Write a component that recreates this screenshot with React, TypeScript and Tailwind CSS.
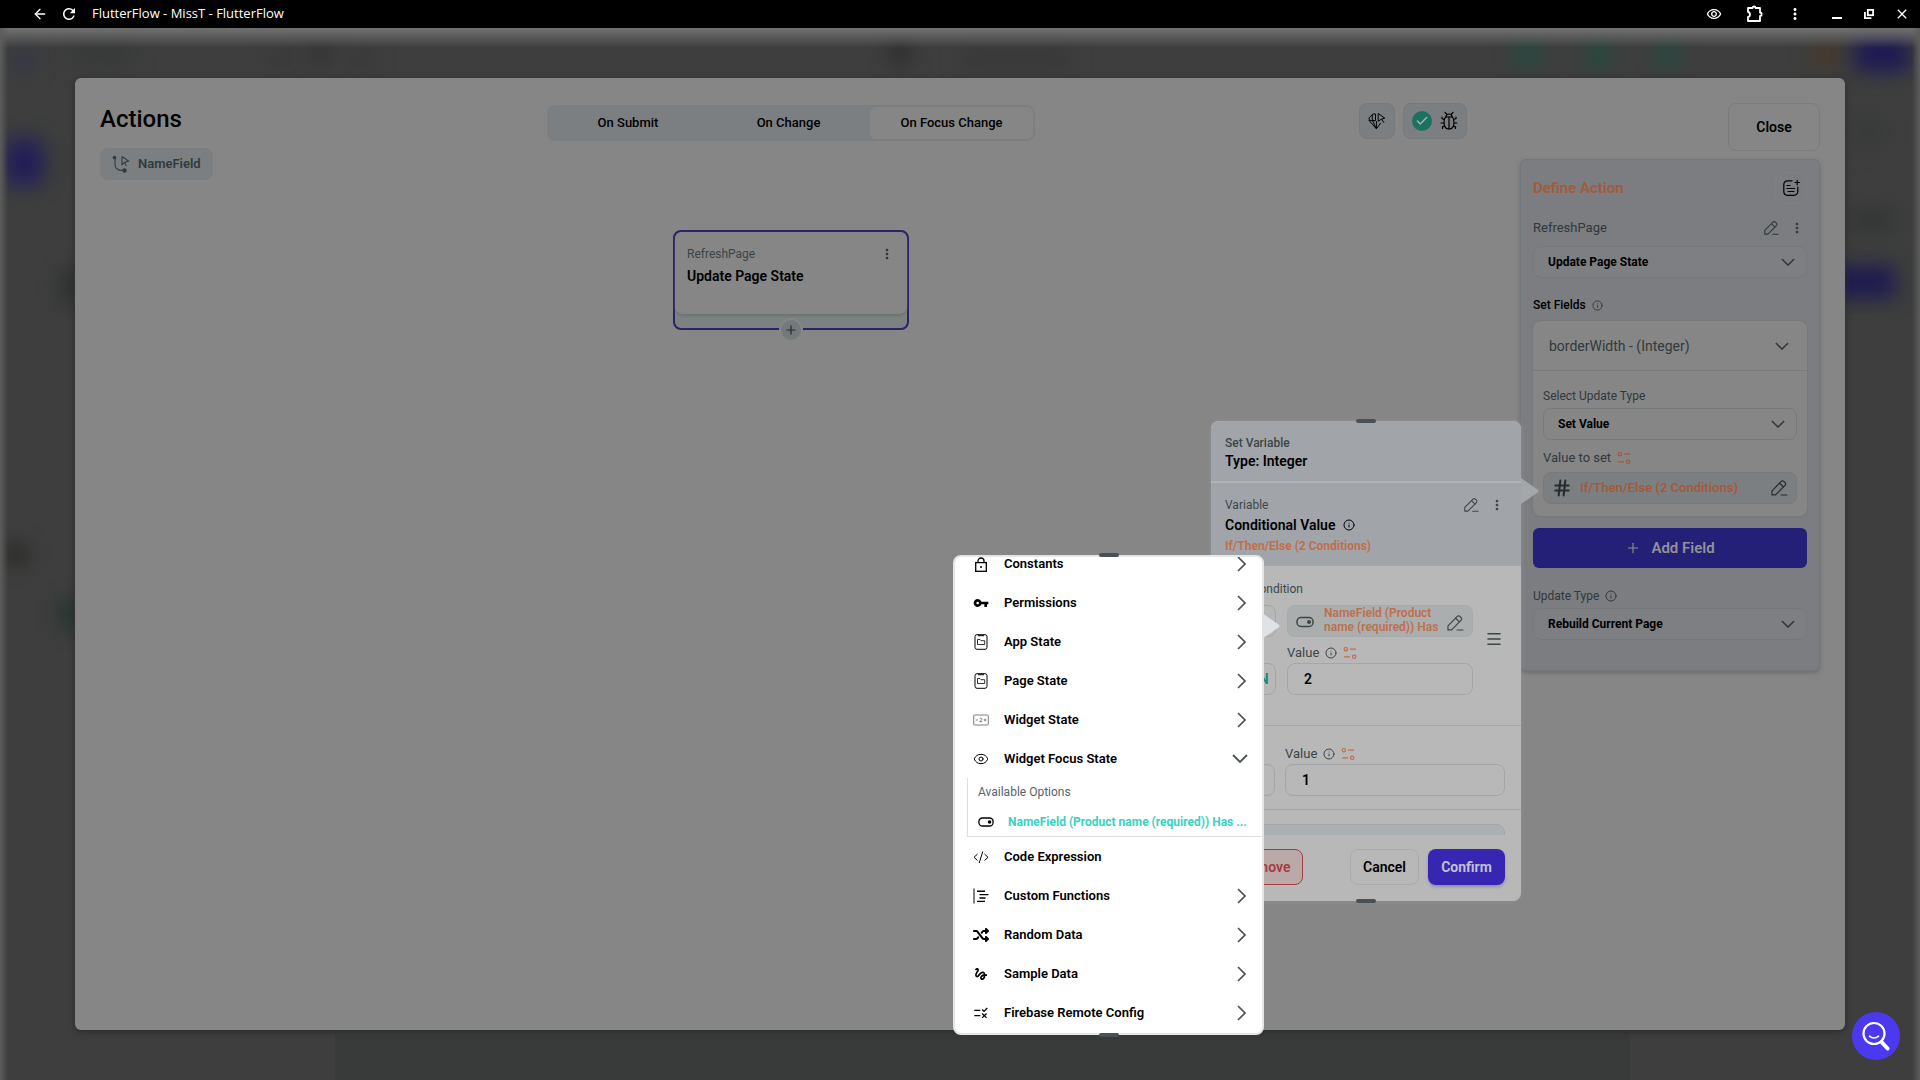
import type { ReactNode } from "react";
import { ArrowLeft, Check, Eye, Hash, Info, Menu, Plus } from "lucide-react";
import { FaShuffle } from "react-icons/fa6";
import {
  MdClose,
  MdGesture,
  MdMoreVert,
  MdOutlineRemoveRedEye,
  MdRefresh,
  MdRule,
  MdVpnKey,
} from "react-icons/md";

/* ---------- Icons ---------- */

function ChevronIcon({ direction, className = "w-3.5 h-2" }: { direction: "right" | "down"; className?: string }) {
  if (direction === "right") {
    return (
      <svg viewBox="0 0 9 16" className="h-4 w-[9px] text-[#4b5154]" fill="none" stroke="currentColor" strokeWidth="1.7">
        <path d="M1 1l7 7-7 7" />
      </svg>
    );
  }
  return (
    <svg viewBox="0 0 16 9" className={className} fill="none" stroke="currentColor" strokeWidth="1.8">
      <path d="M1 1l7 7 7-7" />
    </svg>
  );
}

function PuzzleIcon({ className = "" }: { className?: string }) {
  return (
    <svg viewBox="0 0 18 18" className={`size-[18px] ${className}`} fill="none" stroke="currentColor" strokeWidth="1.8" strokeLinejoin="round">
      <path d="M2 3h4.500c0-2 3-2 3 0H14v4.500c2.200 0 2.200 3.500 0 3.500V16H2v-4c2.600-.3 2.600-4.700 0-5z" />
    </svg>
  );
}

function PencilIcon({ className = "size-4" }: { className?: string }) {
  return (
    <svg viewBox="0 0 18 18" className={className} fill="none" stroke="currentColor" strokeWidth="1.2" strokeLinejoin="round" strokeLinecap="round">
      <path d="M2 16v-4.200L11.300 2.400a1.800 1.800 0 0 1 2.600 0l1.200 1.200a1.800 1.800 0 0 1 0 2.600L5.600 15.900H2z" />
      <path d="M9.600 4.200l3.800 3.700M11 16h6" />
    </svg>
  );
}

function VariableIcon() {
  return (
    <svg viewBox="0 0 14 14" className="size-3.5" fill="none" stroke="currentColor" strokeWidth="1.200">
      <circle cx="2.800" cy="3.200" r="1.700" />
      <circle cx="11.200" cy="10.800" r="1.700" />
      <path d="M7 3.200h6M1 10.800h6" />
    </svg>
  );
}

function ToggleIcon({ className = "w-4 h-3" }: { className?: string }) {
  return (
    <svg viewBox="0 0 18 11" className={className} fill="none" stroke="currentColor" strokeWidth="1.500">
      <rect x="1" y="1" width="16" height="9" rx="4" />
      <circle cx="13" cy="5.500" r="2" fill="currentColor" stroke="none" />
    </svg>
  );
}

function FlowIcon() {
  return (
    <svg viewBox="0 0 18 18" className="size-[18px]" fill="none" stroke="currentColor" strokeWidth="1.100">
      <circle cx="2.500" cy="2.500" r="1.800" fill="currentColor" stroke="none" />
      <circle cx="12.500" cy="15.500" r="2.200" fill="currentColor" stroke="none" />
      <path d="M3 3.500v6c0 4 3 6 8 6" />
      <path d="M10 1.500v8l2.500-2 1.800 3.400M10 1.500l6.500 4.500-4 1.500" />
    </svg>
  );
}

function GemIcon() {
  return (
    <svg viewBox="0 0 18 18" className="size-[18px]" fill="none" stroke="currentColor" strokeLinejoin="round">
      <path d="M7.500 2H4.800L1.200 5.800v2.800h6.300V2M4.300 3v5.600M1.200 8.600l7.200 8.200 4.400-6M4.500 8.600l3.900 8.200V9" />
      <path d="M10.200 1.500l6.600 4.700-3.200.8 2.400 3.800M13.600 7l-3.400 2.300V1.500" />
    </svg>
  );
}

function BugIcon() {
  return (
    <svg viewBox="0 0 18 20" className="h-5 w-[18px]" fill="none" stroke="currentColor" strokeWidth="1.200" strokeLinecap="round">
      <path d="M5.500 6h7c1.200 1.500 1.500 3.500 1.500 5.500 0 4-2 6.500-5 6.500s-5-2.500-5-6.500c0-2 .3-4 1.500-5.500z" />
      <path d="M6 6c0-4 6-4 6 0M9 6v12M6.500 3L5 1.300M11.500 3L13 1.300" />
      <path d="M4.300 8.500L2 7.500V6M13.700 8.500l2.300-1V6M4 12H1M14 12h3M4.700 15L2.500 16v1.500M13.300 15l2.200 1v1.500" />
    </svg>
  );
}

function NotePlusIcon() {
  return (
    <svg viewBox="0 0 18 18" className="size-[18px]" fill="none" stroke="currentColor" strokeWidth="1.200" strokeLinecap="round">
      <path d="M10 1.800H5.500A3.800 3.800 0 0 0 1.800 5.500v7A3.800 3.800 0 0 0 5.500 16.300h6.500a3.800 3.800 0 0 0 3.800-3.800V8" />
      <path d="M15.200 1.300v4.400M13 3.500h4.400M5 6.500h3M5 9.500h7.500M6 12.500h6" />
    </svg>
  );
}

function LockIcon() {
  return (
    <svg viewBox="0 0 16 16" className="size-4" fill="none" stroke="currentColor" strokeWidth="1.300">
      <rect x="2.700" y="6.600" width="10.600" height="8.700" />
      <path d="M5 6.500V5a3 3 0 0 1 6 0v1.500" />
      <circle cx="8" cy="11" r="1" fill="currentColor" stroke="none" />
    </svg>
  );
}

function StateIcon() {
  return (
    <svg viewBox="0 0 16 16" className="size-4" fill="none" stroke="currentColor">
      <rect x="2" y="0.700" width="12" height="14.600" rx="2" />
      <path d="M5 1.700h6" />
      <path d="M4.500 10.500V5.500h2.500l1 1.200h3.700v3.800z" strokeWidth="0.800" />
    </svg>
  );
}

function WidgetIcon() {
  return (
    <svg viewBox="0 0 16 16" className="size-4 text-[#6b7073]" fill="none" stroke="currentColor" strokeWidth="0.900">
      <rect x="0.700" y="3" width="14.600" height="10" rx="0.600" />
      <path d="M2.800 8h2M10.800 8h2.600M12.100 6.700v2.600M6.700 6.800c.3-.8 2.300-.8 2.300.4 0 .8-1.500 1.300-2.300 2.500h2.500" />
    </svg>
  );
}

function CodeIcon() {
  return (
    <svg viewBox="0 0 16 16" className="size-4" fill="none" stroke="currentColor">
      <path d="M4.500 5L1 8.300l3.500 3.200M11.500 5L15 8.300l-3.500 3.200M9.800 2.500L6.200 14" />
    </svg>
  );
}

function FunctionsIcon() {
  return (
    <svg viewBox="0 0 16 16" className="size-4" fill="none" stroke="currentColor" strokeWidth="1.400">
      <path d="M1 0.500v15" strokeWidth="1" />
      <path d="M4 3.200h8M6.500 6.600h9M6.500 10h6M4 13.400h8" />
    </svg>
  );
}

function SearchFace() {
  return (
    <svg viewBox="0 0 30 30" className="size-[30px]" fill="none" stroke="white" strokeLinecap="round">
      <circle cx="13" cy="12.500" r="10.500" strokeWidth="2.200" />
      <path d="M8.500 15.200c2.500 2.300 6.500 2.300 9 0" strokeWidth="1.600" />
      <path d="M20.500 21l6 6.500" strokeWidth="4" />
    </svg>
  );
}

/* ---------- Shared bits ---------- */

type DropdownProps = { id: string; label: string; value: string; className?: string };

function Dropdown({ id, label, value, className = "" }: DropdownProps) {
  return (
    <div className="relative text-[#33393c]">
      <select
        id={id}
        aria-label={label}
        defaultValue={value}
        className={`block h-8 w-full appearance-none rounded-lg border px-3.5 text-xs font-bold text-black ${className}`}
      >
        <option>{value}</option>
      </select>
      <ChevronIcon direction="down" className="pointer-events-none absolute right-3 top-3 h-2 w-3.5" />
    </div>
  );
}

function Handle({ edge }: { edge: string }) {
  return <div className={`absolute left-1/2 h-1 w-5 -translate-x-1/2 rounded-sm bg-[#4a5054] ${edge}`} />;
}

function Pointer({ className }: { className: string }) {
  return (
    <svg viewBox="0 0 18 26" className={`absolute left-full h-[26px] w-[18px] ${className}`} fill="currentColor">
      <path d="M0 0l16.500 11.500q2 1.500 0 3L0 26z" />
    </svg>
  );
}

/* ---------- Title bar ---------- */

function TitleBar() {
  return (
    <header className="flex h-7 items-center justify-between bg-black pl-8 pr-2.5 text-white">
      <div className="flex items-center">
        <button aria-label="Back"><ArrowLeft className="size-4" strokeWidth={2} /></button>
        <button aria-label="Reload" className="ml-3"><MdRefresh className="size-[18px]" /></button>
        <h1 className="ml-3.5 font-['Open_Sans',sans-serif] text-[13px]">FlutterFlow - MissT - FlutterFlow</h1>
      </div>
      <div className="flex items-center">
        <MdOutlineRemoveRedEye className="size-4" />
        <PuzzleIcon className="ml-6" />
        <MdMoreVert className="ml-[22px] size-[18px]" />
        <button aria-label="Minimize" className="ml-7 mt-2 h-0.5 w-2.5 bg-white" />
        <button aria-label="Restore" className="ml-[22px]">
          <svg viewBox="0 0 10 10" className="size-2.5" fill="none" stroke="currentColor" strokeWidth="1.800">
            <rect x="3.800" y="0.900" width="5.300" height="5.300" />
            <path d="M0.900 3v6.100h6.500" />
          </svg>
        </button>
        <button aria-label="Close window" className="ml-5"><MdClose className="size-4" /></button>
      </div>
    </header>
  );
}

/* Shapes of the page behind the dialog, seen through the backdrop */
const blobs = [
  "left-1 top-[110px] h-[48px] w-10 rounded-xl bg-[#231f58]",
  "left-3 top-5 h-6 w-6 rounded-full bg-[#35354a]",
  "left-[70px] top-[10px] h-7 w-16 rounded-full bg-[#383a39]",
  "left-[270px] top-5 h-5 w-6 rounded-full bg-[#383838]",
  "left-[310px] top-4 h-5 w-5 rounded-full bg-[#303030]",
  "left-[350px] top-5 h-5 w-6 rounded-full bg-[#383838]",
  "left-[890px] top-3 h-6 w-5 rounded-full bg-[#282828]",
  "left-[960px] top-5 h-5 w-28 rounded-full bg-[#383838]",
  "left-1 top-[516px] h-5 w-6 rounded-full bg-[#262522]",
  "left-[58px] top-[570px] h-8 w-8 rounded-full bg-[#243430]",
  "left-[62px] top-[240px] h-9 w-6 rounded-full bg-[#2a2f2d]",
  "right-[380px] top-3 h-7 w-6 rounded-full bg-[#244a40]",
  "right-[310px] top-3 h-7 w-6 rounded-full bg-[#244a40]",
  "right-[240px] top-3 h-7 w-6 rounded-full bg-[#244a40]",
  "right-[80px] top-3 h-7 w-7 rounded-full bg-[#4a372b]",
  "right-2.5 top-2 h-9 w-14 rounded-lg bg-[#1e1a54]",
  "right-6 top-[238px] h-8 w-20 rounded-lg bg-[#1e1a50]",
  "right-6 top-[180px] h-6 w-12 rounded-full bg-[#343736]",
  "right-9 top-[88px] h-8 w-8 rounded-full bg-[#383a39]",
];

/* ---------- Left side of the dialog ---------- */

const tabs = [
  { name: "On Submit", width: "w-[158px]" },
  { name: "On Change", width: "w-[163px]" },
  { name: "On Focus Change", width: "w-[163px]", active: true },
];

function Canvas() {
  return (
    <section className="flex-1">
      <div className="grid grid-cols-[1fr_auto_1fr] items-start">
        <div>
          <h2 className="text-2xl font-medium text-black">Actions</h2>
          <div className="mt-[13px] inline-flex h-8 items-center gap-2 rounded-lg bg-[#7c7f81] px-3 text-[13px] font-semibold text-[#2f3b3d]">
            <FlowIcon />
            NameField
          </div>
        </div>

        <div role="tablist" className="mt-0.5 flex h-9 rounded-lg bg-[#7c7f81] p-0.5">
          {tabs.map((tab) => (
            <button
              key={tab.name}
              role="tab"
              aria-selected={!!tab.active}
              className={`rounded-md text-[13px] font-medium text-black ${tab.width} ${tab.active ? "bg-[#868686]" : ""}`}
            >
              {tab.name}
            </button>
          ))}
        </div>

        <div className="mr-[15px] flex justify-end gap-2 text-black">
          <button aria-label="Widget actions" className="flex h-9 w-9 items-center justify-center rounded-lg border border-[#767a7c] bg-[#7c7f81]">
            <GemIcon />
          </button>
          <div className="flex h-9 w-16 items-center justify-center gap-2 rounded-lg border border-[#767a7c] bg-[#7c7f81]">
            <span className="flex size-5 items-center justify-center rounded-full bg-[#1b7261] text-[#a5b5b1]">
              <Check className="size-3.5" strokeWidth={2.5} />
            </span>
            <button aria-label="Debug"><BugIcon /></button>
          </div>
        </div>
      </div>

      {/* Action node */}
      <div className="relative mx-auto mt-[50px] h-[100px] w-[236px] rounded-lg border-2 border-[#2a2366] bg-[#7b8281]">
        <div className="flex h-[82px] justify-between rounded-lg bg-[#868686] pl-3 pr-3 pt-3.5 shadow-[0_2px_2px_#6d7473]">
          <div>
            <p className="text-xs leading-4 text-[#3a4447]">RefreshPage</p>
            <h3 className="mt-1 text-sm font-semibold text-black">Update Page State</h3>
          </div>
          <button aria-label="Node menu" className="h-4 text-[#2c3436]"><MdMoreVert className="size-4" /></button>
        </div>
        <button
          aria-label="Add action"
          className="absolute -bottom-3.5 left-1/2 flex size-6 -translate-x-1/2 items-center justify-center rounded-full border-2 border-[#868686] bg-[#747a7b] text-[#20282a]"
        >
          <Plus className="size-3.5" />
        </button>
      </div>
    </section>
  );
}

/* ---------- Right side of the dialog ---------- */

function DefineAction() {
  return (
    <aside className="flex w-[300px] flex-col">
      <button className="h-12 w-[92px] self-end rounded-lg border border-[#797d7f] text-sm font-semibold text-black">
        Close
      </button>

      <div className="mt-2 rounded-md border border-[#74777a] bg-[#7b7d80] px-3 pb-[30px] pt-3 shadow-[0_2px_4px_#6a6c6e]">
        <div className="flex h-8 items-center justify-between">
          <h2 className="text-[15px] font-semibold text-[#a35a39]">Define Action</h2>
          <button aria-label="Add note" className="flex h-8 w-8 items-center justify-center rounded-lg border border-[#7f8184] text-black">
            <NotePlusIcon />
          </button>
        </div>

        <div className="mt-3 flex h-6 items-center text-[#30383b]">
          <p className="flex-1 text-[13px]">RefreshPage</p>
          <button aria-label="Rename"><PencilIcon /></button>
          <button aria-label="Action menu" className="ml-2.5 mr-0.5"><MdMoreVert className="size-4" /></button>
        </div>
        <div className="mt-1.5">
          <Dropdown id="action-type" label="Action type" value="Update Page State" className="border-[#76797c] bg-[#7d7f82]" />
        </div>

        <p className="mt-[19px] flex items-center gap-1.5 text-xs font-medium text-black">
          Set Fields <Info className="size-[11px] text-[#30383b]" />
        </p>

        <div className="mt-2 rounded-lg bg-[#868686] shadow-[0_0_2px_#6f7274]">
          <div className="flex h-[50px] items-center justify-between border-b border-[#777b7d] pl-4 pr-[18px] text-[#33393c]">
            <h3 className="text-sm">borderWidth - (Integer)</h3>
            <ChevronIcon direction="down" />
          </div>
          <div className="px-2.5 pb-3 pt-[17px]">
            <label htmlFor="update-kind" className="block text-xs text-[#30383b]">Select Update Type</label>
            <div className="mt-1">
              <Dropdown id="update-kind" label="Select Update Type" value="Set Value" className="border-[#777b7d] bg-[#868686]" />
            </div>
            <p className="mt-2 flex h-5 items-center gap-1.5 text-[13px] text-[#30383b]">
              Value to set <span className="text-[#a35a39]"><VariableIcon /></span>
            </p>
            <button className="mt-1 flex h-8 w-full items-center rounded-lg border border-[#767a7c] bg-[#7c7f81] px-2 text-[#242c30]">
              <Hash className="size-5" strokeWidth={2.5} />
              <span className="ml-2 flex-1 text-left text-[13px] font-semibold text-[#a35a39]">If/Then/Else (2 Conditions)</span>
              <PencilIcon className="size-[18px]" />
            </button>
          </div>
        </div>

        <button className="mt-3 flex h-10 w-full items-center justify-center gap-2.5 rounded-md bg-[#241f77] text-[15px] font-semibold text-[#929296]">
          <Plus className="size-4" strokeWidth={1.6} />
          Add Field
        </button>

        <label htmlFor="update-type" className="mt-5 flex items-center gap-1.5 text-xs text-[#30383b]">
          Update Type <Info className="size-3" />
        </label>
        <div className="mt-1">
          <Dropdown id="update-type" label="Update Type" value="Rebuild Current Page" className="border-[#76797c] bg-[#7d7f82]" />
        </div>
      </div>
    </aside>
  );
}

/* ---------- Set variable popup ---------- */

function ValueLabel({ htmlFor }: { htmlFor: string }) {
  return (
    <label htmlFor={htmlFor} className="flex h-5 items-center gap-1.5 text-[13px] text-[#3c4548]">
      Value <Info className="size-3" />
      <span className="text-[#c06f4c]"><VariableIcon /></span>
    </label>
  );
}

function Keyword({ children }: { children: ReactNode }) {
  return (
    <span className="flex h-8 items-center justify-center self-end rounded-lg border border-[#a3a7a9] text-sm font-bold text-[#23887a]">
      {children}
    </span>
  );
}

const valueInput = "block h-8 w-full rounded-lg border border-[#a3a7a9] px-4 text-sm font-semibold text-black";

function SetVariablePopup() {
  return (
    <div className="absolute right-[324px] top-[343px] w-[310px] rounded-lg bg-[#b8b8b8] shadow-[0_0_4px_#8f9193]">
      <Handle edge="-top-0.5" />
      <Pointer className="top-[57px] text-[#a4a7aa]" />

      <div className="h-[62px] rounded-t-lg border-b-2 border-[#b1b4b7] bg-[#a1a5aa] px-3.5 pt-3.5">
        <p className="text-xs font-medium text-[#3c4548]">Set Variable</p>
        <h2 className="text-sm font-semibold text-black">Type: Integer</h2>
      </div>
      <div className="flex h-[83px] bg-[#a1a5aa] px-3.5 pt-3.5 text-[#3c4548]">
        <div className="flex-1">
          <p className="text-xs">Variable</p>
          <h3 className="mt-0.5 flex items-center gap-2 text-sm font-semibold text-black">
            Conditional Value <Info className="size-3" />
          </h3>
          <p className="mt-[3px] text-xs font-bold text-[#c06f4c]">If/Then/Else (2 Conditions)</p>
        </div>
        <button aria-label="Edit variable" className="h-4"><PencilIcon /></button>
        <button aria-label="Variable menu" className="ml-2.5 mr-0.5 h-4"><MdMoreVert className="size-4" /></button>
      </div>

      {/* Conditions */}
      <div className="h-[269px] overflow-hidden text-[#3c4548]">
        <div className="flex h-[160px] border-b border-[#a3a7a9] pl-3.5 pr-[18px]">
          <div className="flex-1 pt-[15px]">
            <p className="text-xs">First Condition</p>
            <div className="mt-2 grid grid-cols-[51px_186px] gap-x-[11px] gap-y-1.5">
              <Keyword>IF</Keyword>
              <button className="flex h-8 items-start rounded-lg border border-[#a6acae] bg-[#aaaeaf] px-2 text-left">
                <ToggleIcon className="mt-2.5 h-3 w-[18px]" />
                <span className="ml-2.5 h-[30px] flex-1 overflow-hidden text-xs font-semibold leading-[14px] text-[#c06f4c]">
                  NameField (Product name (required)) Has
                </span>
                <PencilIcon className="mt-2 size-[18px]" />
              </button>
              <Keyword>THEN</Keyword>
              <div>
                <ValueLabel htmlFor="then-value" />
                <input id="then-value" defaultValue="2" className={valueInput} />
              </div>
            </div>
          </div>
          <button aria-label="Reorder" className="mt-16 h-[18px]"><Menu className="size-[18px]" /></button>
        </div>

        <div className="grid h-[84px] grid-cols-[50px_1fr] gap-x-2.5 border-b border-[#a3a7a9] pl-3.5 pr-4 pt-[18px]">
          <div className="flex h-[52px] flex-col justify-end">
            <span className="h-8 rounded-lg border border-[#a3a7a9]" />
          </div>
          <div>
            <ValueLabel htmlFor="else-value" />
            <input id="else-value" defaultValue="1" className={valueInput} />
          </div>
        </div>

        <div className="pl-3.5 pr-4 pt-3.5">
          <div className="h-8 rounded-lg border border-[#a3a7a9] bg-[#abb0b2]" />
        </div>
      </div>

      <div className="flex h-[66px] px-4 pt-3.5 text-sm font-semibold">
        <button className="h-9 w-[76px] rounded-lg border border-[#a83b40] bg-[#b9a9a8] text-[#a83b40]">Remove</button>
        <button className="ml-auto h-9 w-[69px] rounded-lg border border-[#a9acae] text-black">Cancel</button>
        <button className="ml-[9px] h-9 w-[77px] rounded-lg bg-[#3726b2] font-bold text-[#c1bfd4] shadow-[0_2px_3px_#8f8faa]">Confirm</button>
      </div>
      <Handle edge="-bottom-0.5" />
    </div>
  );
}

/* ---------- Variable source menu ---------- */

type Source = { name: string; icon: ReactNode; chevron?: "right" | "down" };

const topSources: Source[] = [
  { name: "Constants", icon: <LockIcon />, chevron: "right" },
  { name: "Permissions", icon: <MdVpnKey className="size-4" />, chevron: "right" },
  { name: "App State", icon: <StateIcon />, chevron: "right" },
  { name: "Page State", icon: <StateIcon />, chevron: "right" },
  { name: "Widget State", icon: <WidgetIcon />, chevron: "right" },
  { name: "Widget Focus State", icon: <Eye className="size-4" strokeWidth={1.5} />, chevron: "down" },
];

const bottomSources: Source[] = [
  { name: "Code Expression", icon: <CodeIcon /> },
  { name: "Custom Functions", icon: <FunctionsIcon />, chevron: "right" },
  { name: "Random Data", icon: <FaShuffle className="size-4" />, chevron: "right" },
  { name: "Sample Data", icon: <MdGesture className="size-4" />, chevron: "right" },
  { name: "Firebase Remote Config", icon: <MdRule className="size-4" />, chevron: "right" },
];

function SourceRow({ name, icon, chevron }: Source) {
  return (
    <button className="flex h-[39px] w-full items-center pl-[18px] pr-4 text-left text-[13px] font-semibold leading-3 text-black">
      {icon}
      <span className="ml-[15px] flex-1">{name}</span>
      {chevron === "right" && <ChevronIcon direction="right" />}
      {chevron === "down" && <ChevronIcon direction="down" className="-mr-0.5 h-[9px] w-4 text-[#4b5154]" />}
    </button>
  );
}

function SourceMenu() {
  return (
    <div className="absolute right-[581px] top-[477px] w-[311px] rounded-lg border-2 border-[#e4e6e7] bg-white">
      <Handle edge="-top-1" />
      <Pointer className="top-14 text-[#dfe3e5]" />
      <div className="h-[476px] overflow-hidden rounded-md">
        <div className="-mt-[13px]">
          {topSources.map((source) => (
            <SourceRow key={source.name} {...source} />
          ))}
          <div className="ml-3 h-[59px] border-b border-l border-[#dcdfe1] pl-2.5">
            <p className="pt-1.5 text-xs leading-4 text-[#57636c]">Available Options</p>
            <button className="mt-3.5 flex items-center text-xs font-bold text-black">
              <ToggleIcon />
              <span className="ml-3.5 text-[#39d2c0]">NameField (Product name (required)) Has ...</span>
            </button>
          </div>
          {bottomSources.map((source) => (
            <SourceRow key={source.name} {...source} />
          ))}
        </div>
      </div>
      <Handle edge="-bottom-1" />
    </div>
  );
}

export default function App() {
  return (
    <div className="flex min-h-screen flex-col bg-[#3d3d3d] font-[Roboto,sans-serif]">
      <TitleBar />
      <main className="relative flex flex-1 flex-col overflow-hidden px-[75px] py-[50px]">
        {/* Backdrop */}
        <div className="absolute inset-0 overflow-hidden bg-[#3d3e3d]">
          <div className="absolute bottom-0 left-[335px] right-[290px] h-14 bg-[#393b3a]" />
          {blobs.map((blob) => (
            <div key={blob} className={`absolute blur-[10px] ${blob}`} />
          ))}
          <div className="absolute inset-x-0 top-0 h-5 bg-linear-to-b from-[#707070] to-transparent" />
          <div className="absolute inset-y-0 left-0 w-2 bg-linear-to-r from-[#5c5c5c] to-transparent" />
          <div className="absolute inset-y-0 right-0 w-2 bg-linear-to-l from-[#5c5c5c] to-transparent" />
        </div>

        <div role="dialog" aria-label="Actions" className="relative flex flex-1 gap-[38px] rounded-md bg-[#868686] px-[25px] pb-10 pt-[25px] shadow-[0_2px_6px_#2b2b2b]">
          <Canvas />
          <DefineAction />
          <SetVariablePopup />
          <SourceMenu />
        </div>

        <button aria-label="Search help" className="absolute bottom-5 right-5 flex size-12 items-center justify-center rounded-full bg-[#4b39ef]">
          <SearchFace />
        </button>
      </main>
    </div>
  );
}
